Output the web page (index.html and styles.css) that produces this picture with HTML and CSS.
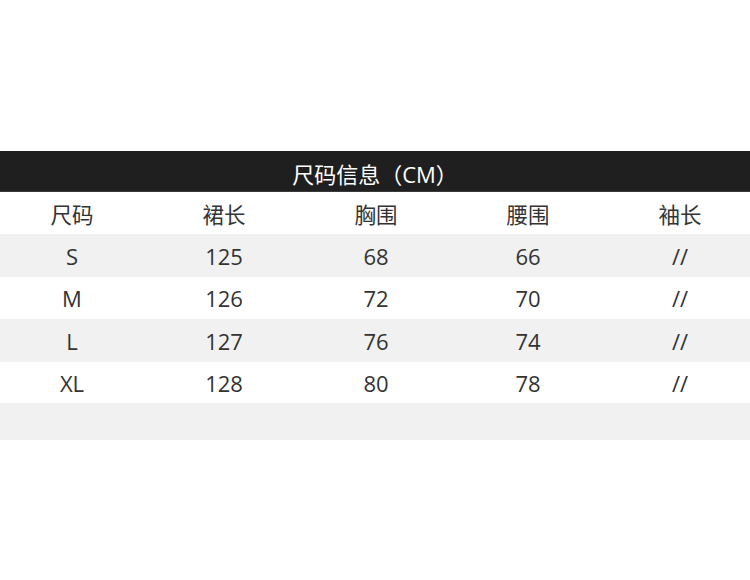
FILE: index.html
```html
<!DOCTYPE html>
<html lang="zh">
<head>
<meta charset="utf-8">
<link rel="stylesheet" href="styles.css">
</head>
<body>
<div class="page">
  <div class="title">尺码信息（CM）</div>
  <div class="table">
    <div class="row head"><span>尺码</span><span>裙长</span><span>胸围</span><span>腰围</span><span>袖长</span></div>
    <div class="row alt tall"><span>S</span><span>125</span><span>68</span><span>66</span><span>//</span></div>
    <div class="row"><span>M</span><span>126</span><span>72</span><span>70</span><span>//</span></div>
    <div class="row alt tall"><span>L</span><span>127</span><span>76</span><span>74</span><span>//</span></div>
    <div class="row short"><span>XL</span><span>128</span><span>80</span><span>78</span><span>//</span></div>
    <div class="row alt empty"></div>
  </div>
</div>
</body>
</html>
```
FILE: styles.css
```css
html, body {
  margin: 0;
  padding: 0;
  background: #ffffff;
  overflow: hidden;
}
.page {
  width: 750px;
  height: 580px;
  padding-top: 151px;
  box-sizing: border-box;
  overflow: hidden;
  font-family: "Open Sans", "Noto Sans CJK SC", sans-serif;
  color: #333333;
}
.title {
  height: 41px;
  padding-top: 3px;
  background: #1f1f1f;
  border-bottom: 1px solid #3a3a3a;
  box-sizing: border-box;
  color: #ffffff;
  font-size: 22px;
  display: flex;
  align-items: center;
  justify-content: center;
}
.table {
  display: flex;
  flex-direction: column;
  width: 760px;
  margin-left: -4px;
}
.row {
  display: grid;
  grid-template-columns: repeat(5, 1fr);
  height: 42px;
  align-items: center;
  font-size: 22px;
}
.row span {
  text-align: center;
}
.head {
  font-size: 21.5px;
}
.tall {
  height: 43px;
}
.short {
  height: 41px;
}
.alt {
  background: #f1f1f1;
}
.empty {
  height: 37px;
}
```
